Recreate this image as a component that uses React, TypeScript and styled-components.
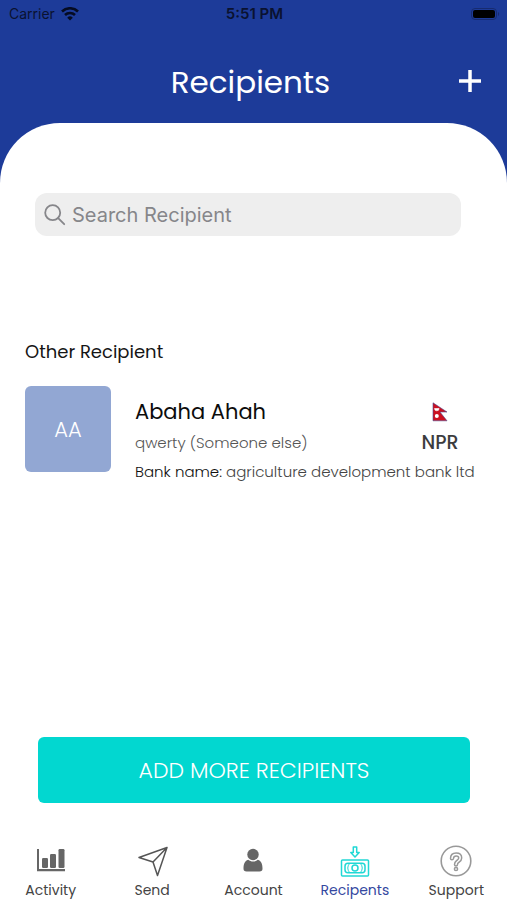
import React from 'react';
import styled, { createGlobalStyle } from 'styled-components';

const brand = '#1d3b99';
const accent = '#02d7d0';
const display = "Poppins, Inter, 'Open Sans', sans-serif";
const system = "Inter, 'Liberation Sans', sans-serif";

const GlobalStyle = createGlobalStyle`
  *, *::before, *::after { box-sizing: border-box; }
  body { margin: 0; background: ${brand}; font-family: ${display}; }
  h1, h2, h3, p { margin: 0; }
  button, input { font: inherit; }
`;

const Page = styled.div`
  display: flex;
  flex-direction: column;
  min-height: 100vh;
  background: ${brand};
`;

const StatusBar = styled.div`
  display: grid;
  grid-template-columns: 1fr auto 1fr;
  align-items: center;
  height: 28px;
  padding: 0 7px 0 9px;
  font: 500 14px/20px ${system};
  color: #0a1230;
`;

const Carrier = styled.div`
  display: flex;
  align-items: center;
  gap: 6px;
  font-weight: 400;
`;

const Clock = styled.time`
  font-size: 15px;
  font-weight: 600;
`;

const Battery = styled.svg`
  justify-self: end;
`;

const TitleBar = styled.header`
  display: grid;
  grid-template-columns: 40px 1fr 40px;
  align-items: center;
  height: 95px;
  padding: 12px 17px 0 11px;
`;

const Title = styled.h1`
  grid-column: 2;
  text-align: center;
  font-size: 31px;
  font-weight: 400;
  line-height: 40px;
  color: #fff;
`;

const IconButton = styled.button`
  display: flex;
  align-items: center;
  justify-content: center;
  width: 40px;
  height: 40px;
  padding: 0;
  border: 0;
  background: none;
  color: #fff;
  cursor: pointer;
`;

const Sheet = styled.main`
  display: flex;
  flex: 1;
  flex-direction: column;
  padding-top: 70px;
  border-radius: 60px 60px 0 0;
  background: #fff;
`;

const SearchField = styled.label`
  display: flex;
  align-items: center;
  gap: 6px;
  height: 43px;
  margin: 0 46px 0 35px;
  padding: 0 9px;
  border-radius: 12px;
  background: #eee;
  color: #86868a;
`;

const SearchInput = styled.input`
  flex: 1;
  min-width: 0;
  padding: 0;
  border: 0;
  outline: 0;
  background: none;
  font: 400 20px/28px ${system};
  color: #333;
  &::placeholder { color: #86868a; opacity: 1; }
`;

const Section = styled.section`
  flex: 1;
  padding: 102px 25px 24px;
`;

const SectionTitle = styled.h2`
  font-size: 18px;
  font-weight: 400;
  line-height: 28px;
  color: #151515;
`;

const Recipient = styled.article`
  display: grid;
  grid-template-columns: 86px 1fr 60px;
  column-gap: 24px;
  margin-top: 20px;
  padding-right: 12px;
`;

const Avatar = styled.div`
  display: flex;
  grid-row: 1 / span 3;
  align-items: center;
  justify-content: center;
  width: 86px;
  height: 86px;
  border-radius: 6px;
  background: #92a7d3;
  font-size: 21px;
  font-weight: 300;
  color: #fff;
`;

const Name = styled.h3`
  padding-top: 11px;
  font-size: 21px;
  font-weight: 400;
  line-height: 30px;
  color: #0c0c0c;
`;

const Detail = styled.p`
  grid-column: 2;
  font-size: 15px;
  font-weight: 300;
  line-height: 32px;
  color: #555;
`;

const Bank = styled.p`
  grid-column: 2 / span 2;
  font-size: 15px;
  font-weight: 300;
  line-height: 26px;
  white-space: nowrap;
  color: #444;
`;

const BankLabel = styled.span`
  color: #111;
`;

const Currency = styled.div`
  display: flex;
  grid-column: 3;
  grid-row: 1 / span 2;
  flex-direction: column;
  align-items: center;
  gap: 8px;
  padding-top: 16px;
  font-size: 19px;
  font-weight: 500;
  line-height: 26px;
  color: #3c3c3e;
`;

const AddButton = styled.button`
  height: 66px;
  margin: 0 37px 0 38px;
  border: 0;
  border-radius: 6px;
  background: ${accent};
  font-size: 22px;
  font-weight: 300;
  color: #fff;
  cursor: pointer;
`;

const TabBar = styled.nav`
  display: grid;
  grid-template-columns: repeat(5, 1fr);
  height: 97px;
  padding-top: 41px;
`;

const Tab = styled.a<{ $active?: boolean }>`
  display: flex;
  flex-direction: column;
  align-items: center;
  gap: 2px;
  font-size: 14px;
  line-height: 20px;
  text-decoration: none;
  color: ${(p) => (p.$active ? '#3447a0' : '#444')};
`;

const ActivityIcon = () => (
  <svg width="34" height="34" viewBox="0 0 34 34" fill="#666">
    <path d="M3 5h2v20h26v2.200H3z" />
    <rect x="8" y="14" width="6" height="10" rx="1.200" />
    <rect x="16" y="10" width="6" height="14" rx="1.200" />
    <rect x="24.500" y="5" width="6" height="19" rx="1.200" />
  </svg>
);

const SendIcon = () => (
  <svg width="34" height="34" viewBox="0 0 34 34" fill="none" stroke="#555" strokeWidth="1.500" strokeLinejoin="round">
    <path d="M32 3.500 4 13.500l14 4.500 4.500 13.500zM32 3.500 18 18" />
  </svg>
);

const AccountIcon = () => (
  <svg width="34" height="34" viewBox="0 0 34 34" fill="#666">
    <circle cx="17" cy="10.500" r="5.700" />
    <path d="M12.200 15.800c3 2.400 6.600 2.400 9.600 0 3.700 1 4.700 4.700 4.700 8.700 0 2.300-1 3-3 3h-13c-2 0-3-.7-3-3 0-4 1-7.700 4.700-8.700z" />
  </svg>
);

const RecipientsIcon = () => (
  <svg width="34" height="34" viewBox="0 0 34 34" fill="none" stroke="#20d8d5" strokeWidth="1.500" strokeLinejoin="round">
    <path d="M15.300 3h3.400v5.500h2.500L17 13l-4.200-4.500h2.500z" />
    <rect x="3.500" y="16" width="27" height="16" rx="1" />
    <path d="M10 19.200h14q3 0 3 3v3.600q0 3-3 3H10q-3 0-3-3v-3.600q0-3 3-3z" />
    <path d="M11.500 19.500q-3.500 4.500 0 9M22.500 19.500q3.500 4.500 0 9" strokeWidth="1" />
    <circle cx="17" cy="24" r="3" />
  </svg>
);

const SupportIcon = () => (
  <svg width="34" height="34" viewBox="0 0 34 34" fill="none" stroke="#999" strokeWidth="1.600">
    <circle cx="17" cy="17" r="14.800" />
    <path
      strokeWidth="1.500"
      strokeLinejoin="round"
      d="M11.500 14.500c0-3.500 2.300-5.500 5.700-5.500s5.500 2.100 5.500 4.900c0 2.500-1.500 3.500-2.900 4.500-.9.700-1.300 1.100-1.300 2.100 0 2.100-3 2.100-3 0 0-2.300 1.200-3.200 2.400-4.200 1-.8 1.800-1.300 1.800-2.400s-.9-2-2.500-2-2.600.9-2.700 2.600c-.2 1.800-3 1.800-3 0z"
    />
    <circle cx="17" cy="25" r="1.600" strokeWidth="1.500" />
  </svg>
);

const tabs = [
  { label: 'Activity', Icon: ActivityIcon },
  { label: 'Send', Icon: SendIcon },
  { label: 'Account', Icon: AccountIcon },
  { label: 'Recipents', Icon: RecipientsIcon, active: true },
  { label: 'Support', Icon: SupportIcon },
];

export default function App() {
  return (
    <>
      <GlobalStyle />
      <Page>
        <StatusBar>
          <Carrier>
            Carrier
            <svg width="18" height="14" viewBox="0 0 18 14" fill="none" stroke="#050b22" strokeWidth="2.600">
              <path d="M1 4.500a11.500 11.500 0 0 1 16 0M4 8a7.200 7.200 0 0 1 10 0" />
              <path d="M9 13.500 6.200 10.700a4 4 0 0 1 5.600 0z" fill="#050b22" stroke="none" />
            </svg>
          </Carrier>
          <Clock>5:51 PM</Clock>
          <Battery width="30" height="14" viewBox="0 0 30 14">
            <rect x="1.500" y="1.500" width="25" height="11" rx="3.500" fill="none" stroke="#172b70" />
            <rect x="3" y="3" width="22" height="8" rx="2" fill="#000" />
            <path d="M28 5c1.500.5 1.500 3.500 0 4z" fill="#172b70" />
          </Battery>
        </StatusBar>
        <TitleBar>
          <Title>Recipients</Title>
          <IconButton aria-label="Add recipient">
            <svg width="24" height="24" viewBox="0 0 24 24" stroke="currentColor" strokeWidth="3.500">
              <path d="M12 0v22M1 11h22" />
            </svg>
          </IconButton>
        </TitleBar>
        <Sheet>
          <SearchField>
            <svg width="22" height="22" viewBox="0 0 22 22" fill="none" stroke="currentColor" strokeWidth="1.800" strokeLinecap="round">
              <circle cx="8.700" cy="8.700" r="7.500" />
              <path d="m14.200 14.200 6 6" />
            </svg>
            <SearchInput type="search" placeholder="Search Recipient" aria-label="Search Recipient" />
          </SearchField>
          <Section>
            <SectionTitle>Other Recipient</SectionTitle>
            <Recipient>
              <Avatar>AA</Avatar>
              <Name>Abaha Ahah</Name>
              <Detail>qwerty (Someone else)</Detail>
              <Currency>
                <svg width="16" height="20" viewBox="0 0 16 20">
                  <path d="M1 .8 15 10H8l7 8.800H1z" fill="#cc1020" stroke="#4a4a8e" strokeWidth=".6" />
                  <path d="M2.500 6.500a2.300 2.300 0 0 0 4.600 0z" fill="#fff" stroke="#fff" strokeWidth=".6" />
                  <circle cx="4.800" cy="14" r="2" fill="#fff" />
                </svg>
                NPR
              </Currency>
              <Bank>
                <BankLabel>Bank name:</BankLabel> agriculture development bank ltd
              </Bank>
            </Recipient>
          </Section>
          <AddButton>ADD MORE RECIPIENTS</AddButton>
          <TabBar>
            {tabs.map(({ label, Icon, active }) => (
              <Tab key={label} href="#" $active={active} aria-current={active ? 'page' : undefined}>
                <Icon />
                {label}
              </Tab>
            ))}
          </TabBar>
        </Sheet>
      </Page>
    </>
  );
}
